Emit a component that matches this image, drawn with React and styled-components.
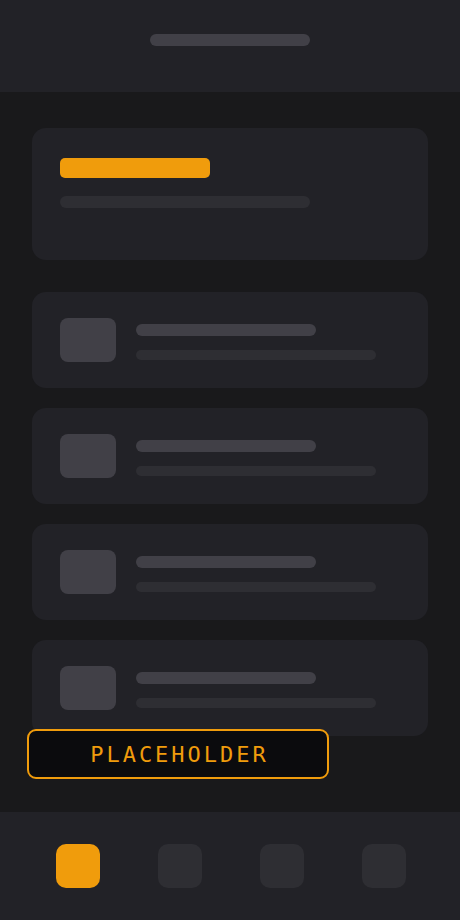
import styled, { createGlobalStyle } from "styled-components";

const GlobalStyle = createGlobalStyle`
  html, body {
    margin: 0;
    padding: 0;
    background: #19191b;
    font-family: "DejaVu Sans Mono", monospace;
  }
`;

const Screen = styled.div`
  position: relative;
  width: 460px;
  height: 920px;
  display: flex;
  flex-direction: column;
  background: #19191b;
  overflow: hidden;
`;

const Header = styled.header`
  height: 92px;
  flex: none;
  background: #222227;
  display: flex;
  justify-content: center;
  padding-top: 34px;
  box-sizing: border-box;
`;

const Bar = styled.div`
  width: ${(p) => p.w}px;
  height: ${(p) => p.h}px;
  border-radius: ${(p) => p.r || p.h / 2}px;
  background: ${(p) => p.color};
  margin-top: ${(p) => p.mt || 0}px;
`;

const Main = styled.main`
  flex: 1;
  padding: 36px 32px 0;
  display: flex;
  flex-direction: column;
  gap: 20px;
`;

const HeroCard = styled.section`
  height: 132px;
  box-sizing: border-box;
  padding: 30px 28px;
  border-radius: 14px;
  background: #222227;
  margin-bottom: 12px;
`;

const Row = styled.div`
  height: 96px;
  box-sizing: border-box;
  padding: 26px 28px;
  border-radius: 14px;
  background: #222227;
  display: flex;
  align-items: flex-start;
  gap: 20px;
`;

const Thumb = styled.div`
  width: 56px;
  height: 44px;
  border-radius: 8px;
  background: #414047;
  flex: none;
`;

const Lines = styled.div`
  display: flex;
  flex-direction: column;
  padding-top: 6px;
`;

const FloatButton = styled.button`
  position: absolute;
  left: 27px;
  top: 729px;
  width: 302px;
  height: 50px;
  box-sizing: border-box;
  border: 2px solid #f09c0c;
  border-radius: 9px;
  background: #0b0b0d;
  color: #f09c0c;
  font-family: "DejaVu Sans Mono", monospace;
  font-size: 22px;
  letter-spacing: 3px;
  padding: 0 0 0 3px;
  cursor: pointer;
`;

const Nav = styled.nav`
  height: 108px;
  flex: none;
  background: #222227;
  display: flex;
  justify-content: space-between;
  align-items: flex-start;
  padding: 32px 54px 0 56px;
  box-sizing: border-box;
`;

const NavItem = styled.div`
  width: 44px;
  height: 44px;
  border-radius: 10px;
  background: ${(p) => (p.active ? "#f09c0c" : "#2e2e33")};
`;

export default function App() {
  const rows = [0, 1, 2, 3];
  return (
    <>
      <GlobalStyle />
      <Screen>
        <Header>
          <Bar w={160} h={12} color="#414047" />
        </Header>
        <Main>
          <HeroCard>
            <Bar w={150} h={20} r={5} color="#f09c0c" />
            <Bar w={250} h={12} color="#2e2e33" mt={18} />
          </HeroCard>
          {rows.map((i) => (
            <Row key={i}>
              <Thumb />
              <Lines>
                <Bar w={180} h={12} color="#414047" />
                <Bar w={240} h={10} color="#2e2e33" mt={14} />
              </Lines>
            </Row>
          ))}
        </Main>
        <FloatButton>PLACEHOLDER</FloatButton>
        <Nav>
          <NavItem active />
          <NavItem />
          <NavItem />
          <NavItem />
        </Nav>
      </Screen>
    </>
  );
}
